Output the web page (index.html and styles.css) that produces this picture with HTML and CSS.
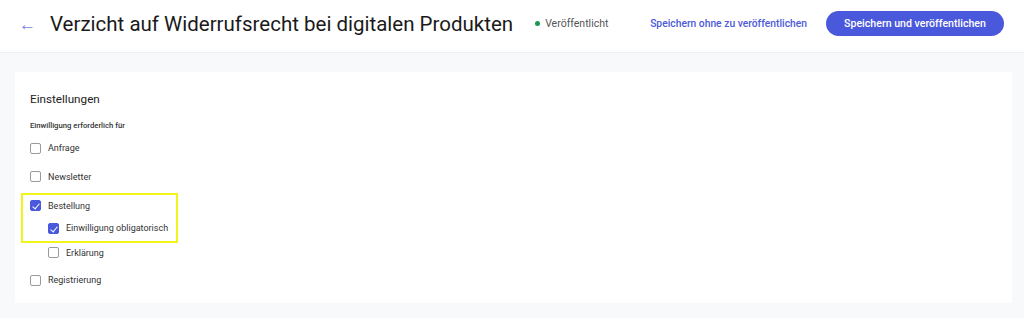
FILE: index.html
```html
<!DOCTYPE html>
<html>
<head>
    <meta charset="utf-8">
    <title>Verzicht auf Widerrufsrecht</title>
    <link rel="stylesheet" href="styles.css">
</head>
<body>
    <div class="topbar">
        <a href="javascript:;" class="back">&larr;</a>
        <h1>Verzicht auf Widerrufsrecht bei digitalen Produkten</h1>
        <span class="status"><i></i>Veröffentlicht</span>
        <div class="actions">
            <a href="javascript:;" class="save-draft">Speichern ohne zu veröffentlichen</a>
            <a href="javascript:;" class="save-publish">Speichern und veröffentlichen</a>
        </div>
    </div>
    <div class="main">
        <div class="card">
            <h2>Einstellungen</h2>
            <p class="hint">Einwilligung erforderlich für</p>
            <ul class="options">
                <li><span class="box"></span>Anfrage</li>
                <li><span class="box"></span>Newsletter</li>
                <li class="group">
                    <div class="mark">
                        <div class="row first"><span class="box on"></span>Bestellung</div>
                        <div class="row sub"><span class="box on"></span>Einwilligung obligatorisch</div>
                    </div>
                    <div class="row sub last"><span class="box"></span>Erklärung</div>
                </li>
                <li><span class="box"></span>Registrierung</li>
            </ul>
        </div>
    </div>
</body>
</html>
```

FILE: styles.css
```css
*{
    margin: 0;
    padding: 0;
    box-sizing: border-box;
}
body{
    font-family: Roboto, "Liberation Sans", sans-serif;
    background: #f8f9fb;
    color: #222;
    height: 318px;
    overflow: hidden;
}
.topbar{
    height: 53px;
    background: #fff;
    border-bottom: 1px solid #eef0f3;
    display: flex;
    align-items: center;
    padding: 0 20px 0 19px;
    white-space: nowrap;
}
.back{
    color: #7b82e6;
    text-decoration: none;
    font-size: 17px;
    width: 31px;
    flex: none;
    margin-top: -3px;
}
h1{
    font-size: 20.5px;
    font-weight: 400;
    color: #1a1a1a;
    margin-top: -4px;
    flex: none;
}
.status{
    display: flex;
    align-items: center;
    font-size: 10.5px;
    color: #555;
    margin-left: 22px;
    margin-top: -6px;
    flex: none;
}
.status i{
    width: 5px;
    height: 5px;
    border-radius: 50%;
    background: #1a9a4f;
    margin-right: 5px;
}
.actions{
    margin-left: auto;
    display: flex;
    align-items: center;
    margin-top: -6px;
    flex: none;
}
.save-draft{
    color: #4d5bd8;
    font-size: 10.3px;
    font-weight: 500;
    text-decoration: none;
    margin-right: 19px;
}
.save-publish{
    background: #4a58dc;
    color: #fff;
    font-size: 10.6px;
    font-weight: 500;
    text-decoration: none;
    width: 178px;
    height: 25px;
    border-radius: 13px;
    display: flex;
    align-items: center;
    justify-content: center;
}
.main{
    padding: 19px 12px 0 15px;
}
.card{
    background: #fff;
    height: 231px;
    padding: 20px 15px 0 15px;
}
h2{
    font-size: 11.7px;
    font-weight: 400;
    color: #222;
    height: 15px;
}
.hint{
    font-size: 7.7px;
    font-weight: 500;
    color: #333;
    margin-top: 14px;
}
.options{
    list-style: none;
    margin-top: 4px;
    white-space: nowrap;
}
.options li{
    display: flex;
    align-items: center;
    font-size: 9px;
    color: #333;
    height: 28.5px;
}
.options li.group{
    display: block;
    height: auto;
}
.row{
    display: flex;
    align-items: center;
    height: 24px;
}
.row.first{
    height: 21px;
}
.mark{
    border: 2px solid #f2f51a;
    margin-left: -9px;
    margin-top: 2px;
    padding-left: 7px;
    width: 157px;
    padding-bottom: 1px;
}
.sub{
    padding-left: 18px;
}
.last{
    padding-left: 18px;
    height: 19px;
    margin-bottom: 4px;
}
.box{
    width: 11px;
    height: 11px;
    border: 1px solid #9a9a9a;
    border-radius: 2px;
    margin-right: 7px;
    flex: none;
    background: #fff;
    position: relative;
}
.box.on{
    background: #4a58dc;
    border-color: #4a58dc;
}
.box.on:after{
    content: "";
    position: absolute;
    left: 3px;
    top: 1px;
    width: 3px;
    height: 6px;
    border: solid #fff;
    border-width: 0 1.3px 1.3px 0;
    transform: rotate(40deg);
}
```
